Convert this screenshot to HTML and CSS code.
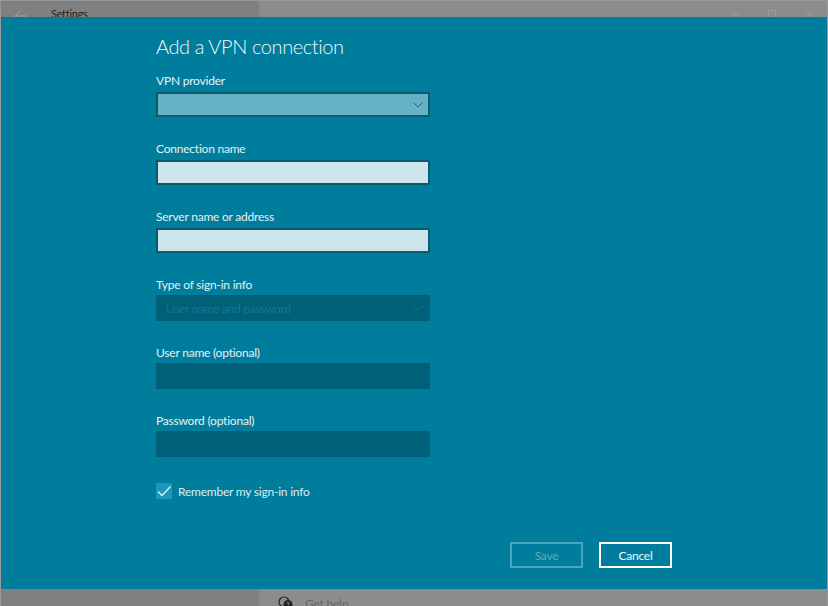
FILE: index.html
```html
<!DOCTYPE html>
<html lang="en">
<head>
<meta charset="utf-8">
<title>Add a VPN connection</title>
<link rel="stylesheet" href="styles.css">
</head>
<body>
<div class="window">
  <header class="titlebar">
    <div class="side-head">
      <svg class="back" width="14" height="12" viewBox="0 0 14 12"><path d="M6 1 1 6l5 5M1 6h12" fill="none" stroke="#a2a2a2" stroke-width="1"/></svg>
      <span class="app-name">Settings</span>
    </div>
    <div class="controls">
      <svg width="10" height="10" viewBox="0 0 10 10"><path d="M1 5.500h8" stroke="#9c9c9c" fill="none"/></svg>
      <svg width="10" height="10" viewBox="0 0 10 10"><rect x="1.500" y="1.500" width="7" height="7" stroke="#9c9c9c" fill="none"/></svg>
      <svg width="10" height="10" viewBox="0 0 10 10"><path d="M1 1l8 8M9 1l-8 8" stroke="#9c9c9c" fill="none"/></svg>
    </div>
  </header>
  <main class="dialog">
    <h1 class="title">Add a VPN connection</h1>
    <div class="field">
      <div class="label">VPN provider</div>
      <div class="box box-select">
        <svg class="chev" width="10" height="6" viewBox="0 0 10 6"><path d="M.5 .5 5 5 9.500 .5" fill="none" stroke="#2b5f70" stroke-width="1"/></svg>
      </div>
    </div>
    <div class="field">
      <div class="label">Connection name</div>
      <div class="box box-input"></div>
    </div>
    <div class="field">
      <div class="label">Server name or address</div>
      <div class="box box-input"></div>
    </div>
    <div class="field">
      <div class="label">Type of sign-in info</div>
      <div class="box box-disabled">
        <span class="disabled-text">User name and password</span>
        <svg class="chev" width="10" height="6" viewBox="0 0 10 6"><path d="M.5 .5 5 5 9.500 .5" fill="none" stroke="#0f7890" stroke-width="1"/></svg>
      </div>
    </div>
    <div class="field">
      <div class="label">User name (optional)</div>
      <div class="box box-disabled"></div>
    </div>
    <div class="field">
      <div class="label">Password (optional)</div>
      <div class="box box-disabled"></div>
    </div>
    <div class="remember">
      <span class="check">
        <svg width="16" height="16" viewBox="0 0 16 16"><path d="M2 8.500l4 4L14.500 3.500" fill="none" stroke="#e6f3f6" stroke-width="1.300"/></svg>
      </span>
      <span class="remember-text">Remember my sign-in info</span>
    </div>
    <div class="actions">
      <div class="btn btn-save">Save</div>
      <div class="btn btn-cancel">Cancel</div>
    </div>
  </main>
  <footer class="footerbar">
    <div class="side-foot"></div>
    <div class="help">
      <svg width="16" height="14" viewBox="0 0 16 14"><circle cx="6" cy="6" r="5" fill="none" stroke="#222" stroke-width="1.200"/><circle cx="10" cy="8.500" r="4.500" fill="#222"/><path d="M8.800 7.500a1.200 1.200 0 1 1 1.600 1.100v.8" fill="none" stroke="#8c8c8c"/></svg>
      <span class="help-text">Get help</span>
    </div>
  </footer>
</div>
</body>
</html>
```

FILE: styles.css
```css
* { box-sizing: border-box; }
html, body { margin: 0; height: 100%; }
body {
  background: #8c8c8c;
  font-family: Lato, "Open Sans", "Liberation Sans", sans-serif;
  font-size: 12px;
  letter-spacing: -0.22px;
  overflow: hidden;
}
.window {
  width: 828px;
  height: 606px;
  display: flex;
  flex-direction: column;
  overflow: hidden;
  border: 1px solid #999;
  border-bottom: 0;
}
.titlebar {
  height: 16px;
  display: flex;
  justify-content: space-between;
  flex: none;
}
.side-head {
  width: 258px;
  background: #808080;
  display: flex;
  align-items: flex-start;
  padding: 7px 0 0 13px;
  gap: 23px;
}
.back { margin-top: 2px; flex: none; }
.app-name {
  font-size: 11px;
  line-height: 12px;
  color: #222;
  letter-spacing: -0.3px;
}
.controls {
  display: flex;
  gap: 27px;
  padding: 8px 13px 0 0;
}
.controls svg { flex: none; }
.dialog {
  flex: none;
  height: 572px;
  margin: 0 -1px;
  background: #007d9c;
  padding: 17px 0 0 156px;
  display: flex;
  flex-direction: column;
}
.title {
  margin: 0 0 14px;
  font-size: 20px;
  line-height: 24px;
  font-weight: 300;
  letter-spacing: -0.4px;
  color: #f2f9fb;
}
.field {
  width: 274px;
  height: 68px;
  flex: none;
}
.label {
  line-height: 17px;
  height: 19px;
  color: #e4f1f5;
}
.box {
  height: 26px;
  display: flex;
  align-items: center;
  justify-content: space-between;
  padding-right: 7px;
}
.box-select {
  height: 25px;
  margin-top: 1px;
  padding-right: 5px;
  background: #66b1c4;
  border: 2px solid #0a5a70;
  justify-content: flex-end;
}
.box-input {
  height: 25px;
  margin-top: 1px;
  background: #cce5ec;
  border: 2px solid #0a5a70;
}
.box-disabled {
  background: #006077;
  padding-left: 10px;
}
.disabled-text {
  color: #0e7a91;
  letter-spacing: -0.32px;
}
.remember {
  display: flex;
  align-items: center;
  gap: 6px;
  margin-top: 3px;
  height: 16px;
}
.check {
  width: 16px;
  height: 16px;
  background: #1a97b9;
  display: flex;
  flex: none;
}
.remember-text {
  color: #d9ecf1;
}
.actions {
  display: flex;
  gap: 16px;
  margin: 43px 0 0 354px;
}
.btn {
  width: 73px;
  height: 26px;
  padding-top: 1px;
  display: flex;
  align-items: center;
  justify-content: center;
  flex: none;
}
.btn-save {
  border: 2px solid #4da3b9;
  color: #5aacc0;
}
.btn-cancel {
  border: 2px solid #fff;
  color: #eef7f9;
}
.footerbar {
  flex: none;
  height: 17px;
  display: flex;
  overflow: hidden;
}
.side-foot {
  width: 258px;
  background: #808080;
}
.help {
  display: flex;
  align-items: flex-start;
  gap: 11px;
  padding: 7px 0 0 19px;
}
.help svg { flex: none; }
.help-text {
  line-height: 16px;
  color: #666;
}
```
